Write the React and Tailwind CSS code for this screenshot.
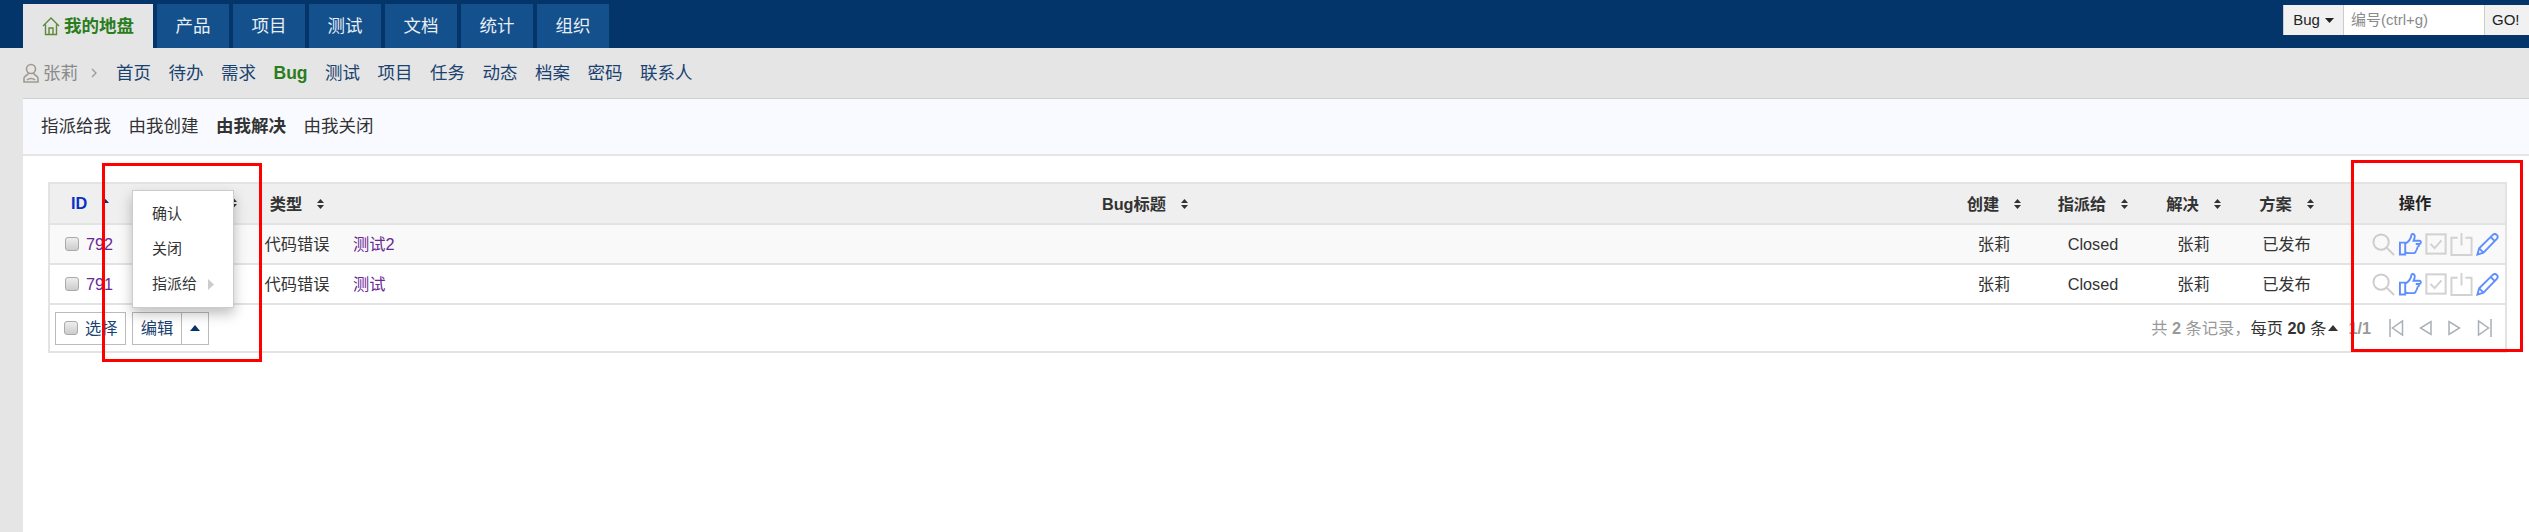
import { Fragment } from "react";

const tabs = ["产品", "项目", "测试", "文档", "统计", "组织"];
const links = ["首页", "待办", "需求", "Bug", "测试", "项目", "任务", "动态", "档案", "密码", "联系人"];
const filters = ["指派给我", "由我创建", "由我解决", "由我关闭"];
const rows = [
  { id: "792", title: "测试2", bg: "bg-[#f9f9f9]" },
  { id: "791", title: "测试", bg: "bg-white" },
];

function SortIcon({ up = true, down = true, color = "#333" }) {
  return (
    <svg width="7" height="12" viewBox="0 0 7 12" className="shrink-0">
      {up && <path d="M3.5 1L7 5H0z" fill={color} />}
      {down && <path d="M3.5 11L0 7h7z" fill={color} />}
    </svg>
  );
}

function Th({ label, className = "" }) {
  return (
    <th className={`font-bold text-[#333] ${className}`}>
      <span className="inline-flex items-center gap-[15px] align-middle">
        {label}
        <SortIcon />
      </span>
    </th>
  );
}

function Checkbox() {
  return (
    <span className="inline-block w-[14px] h-[14px] rounded-[3px] border border-[#aaa] bg-gradient-to-b from-[#eee] to-[#ccc] shrink-0" />
  );
}

function ActionIcons() {
  return (
    <div className="flex items-center justify-end gap-[3px] pr-[6px]">
      <svg width="23" height="23" viewBox="0 0 24 24" fill="none" stroke="#ccc" strokeWidth="2">
        <circle cx="9.5" cy="9.5" r="8" />
        <path d="M15.5 15.5L23 23" />
      </svg>
      <svg width="24" height="23" viewBox="0 0 24 24" fill="none" stroke="#5f8fff" strokeWidth="2">
        <path d="M1.5 10h5.5v12.5H1.5z" />
        <path d="M7 11c3-1.5 6-4.5 6.5-9 .2-1.8 3.5-1.2 3.5 1.5 0 1.8-.5 3-1.2 4.5H22c1.8 0 1.8 3.5-.2 3.5H18M21 12c1 1-.5 3-2 3M19 15c1 1 0 3-1 3M18 18c.5 1-.5 3-2 3H10c-1.2 0-2-.5-3-1" />
      </svg>
      <svg width="22" height="22" viewBox="0 0 24 24" fill="none" stroke="#d2d2d2" strokeWidth="2.2">
        <rect x="1.5" y="1.5" width="21" height="21" />
        <path d="M6 12l4.5 4.5L18 8" />
      </svg>
      <svg width="23" height="23" viewBox="0 0 24 24" fill="none" stroke="#d2d2d2" strokeWidth="2">
        <path d="M8 5H1.5v18h21V5H16" />
        <path d="M12 0v13" />
      </svg>
      <svg width="23" height="23" viewBox="0 0 24 24" fill="none" stroke="#5f8fff" strokeWidth="2">
        <path d="M1.5 22.5l1.8-6.5L17.5 2c1.2-1.2 3-1.2 4.2 0s1 3 0 4.2L7.8 20.5z" />
        <path d="M15.5 4.5l4.2 4M3.3 16l4.5 4.5" />
      </svg>
    </div>
  );
}

function Pager() {
  const stroke = "#aab0b6";
  return (
    <div className="flex items-center ml-[18px] gap-[15px]">
      <svg width="15" height="18" viewBox="0 0 15 18" fill="none" stroke={stroke} strokeWidth="1.5">
        <path d="M1 0v18M13.5 2v14L3.5 9z" />
      </svg>
      <svg width="13" height="16" viewBox="0 0 13 16" fill="none" stroke={stroke} strokeWidth="1.5">
        <path d="M12 1.5v13L1.5 8z" />
      </svg>
      <svg width="13" height="16" viewBox="0 0 13 16" fill="none" stroke={stroke} strokeWidth="1.5" className="ml-[1px]">
        <path d="M1 1.5v13L11.5 8z" />
      </svg>
      <svg width="15" height="18" viewBox="0 0 15 18" fill="none" stroke={stroke} strokeWidth="1.5" className="ml-[1px]">
        <path d="M14 0v18M1.5 2v14l10-7z" />
      </svg>
    </div>
  );
}

export default function App() {
  return (
    <div
      className="relative w-full h-[532px] overflow-hidden bg-[#e5e5e5] flex flex-col"
      style={{ fontFamily: '"Liberation Sans", "Noto Sans CJK SC", sans-serif' }}
    >
      {/* top bar */}
      <div className="h-[48px] shrink-0 bg-[#03356a] flex items-end justify-between">
        <div className="flex items-end gap-[4px] pl-[23px]">
          <div className="h-[44px] w-[130px] bg-[#e5e5e5] flex items-center pl-[19px] gap-[4px] text-[17.5px] font-bold text-[#2a7d1c]">
            <svg width="18" height="20" viewBox="0 0 18 20" fill="none" stroke="#5d8a3a" strokeWidth="1.4">
              <path d="M1 10L9 2l8 8M3.5 8.5V18.500h11V8.500M7 18.500v-6.500h4v6.500" />
            </svg>
            我的地盘
          </div>
          {tabs.map((t) => (
            <div
              key={t}
              className="h-[44px] w-[72px] bg-[#14508c] text-[#e8eef5] text-[17.5px] flex items-center justify-center"
            >
              {t}
            </div>
          ))}
        </div>
        <div className="self-start mt-[5px] h-[30px] flex text-[15px]">
          <div className="w-[60px] bg-[#f1f1f1] flex items-center justify-center gap-[5px] text-[#222] border-l border-[#ccc]">
            Bug
            <svg width="9" height="5" viewBox="0 0 9 5">
              <path d="M0 0h9L4.500 5z" fill="#222" />
            </svg>
          </div>
          <div className="w-[141px] bg-white border-l border-[#ccc] flex items-center pl-[7px] text-[#8a8a8a]">
            编号(ctrl+g)
          </div>
          <div className="w-[45px] bg-[#f1f1f1] border-l border-[#ccc] flex items-center pl-[7px] text-[#222]">
            GO!
          </div>
        </div>
      </div>

      {/* sub nav */}
      <div className="h-[50px] shrink-0 flex items-center pl-[23px] text-[17.5px]">
        <svg width="16" height="20" viewBox="0 0 16 20" fill="none" stroke="#a09a90" strokeWidth="1.6">
          <circle cx="8" cy="6" r="4.500" />
          <path d="M5.500 10c0 2-4.500 3-4.500 5v4h14v-4c0-2-4.500-3-4.500-5M4 17c2-2 6-2 8 0" />
        </svg>
        <span className="ml-[4px] text-[#8a8a8a]">张莉</span>
        <svg width="6" height="10" viewBox="0 0 6 10" fill="none" stroke="#9a9a9a" strokeWidth="1.3" className="ml-[13px]">
          <path d="M1 1l4 4-4 4" />
        </svg>
        <div className="flex items-center gap-[17.5px] ml-[19px] text-[#1a4270]">
          {links.map((l, i) =>
            l === "Bug" ? (
              <span key={i} className="font-bold text-[#2a7d1c]">
                {l}
              </span>
            ) : (
              <span key={i}>{l}</span>
            )
          )}
        </div>
      </div>

      {/* main panel */}
      <div className="flex-1 ml-[23px] bg-white border-t border-[#d0d0d0] flex flex-col">
        <div className="h-[57px] shrink-0 bg-[#f9faff] border-b-2 border-[#e5e5e5] flex items-center gap-[17.500px] pl-[18px] text-[17.5px] text-[#333]">
          {filters.map((f) => (
            <span key={f} className={f === "由我解决" ? "font-bold" : ""}>
              {f}
            </span>
          ))}
        </div>

        <div className="pt-[26px] pl-[25px] pr-[22px]">
          <div className="relative border-2 border-[#e3e3e3] text-[16.25px] text-[#333]">
            <table className="w-full table-fixed border-collapse">
              <colgroup>
                <col className="w-[80px]" />
                <col className="w-[129px]" />
                <col className="w-[76px]" />
                <col />
                <col className="w-[98px]" />
                <col className="w-[100px]" />
                <col className="w-[101px]" />
                <col className="w-[85px]" />
                <col className="w-[176px]" />
              </colgroup>
              <thead>
                <tr className="h-[40px] bg-[#efefef] border-b-2 border-[#e3e3e3]">
                  <th className="text-left pl-[21px] font-bold text-[#0b2fc4]">
                    <span className="inline-flex items-center gap-[15px]">
                      ID
                      <SortIcon down={false} color="#03356a" />
                    </span>
                  </th>
                  <th className="text-right pr-[22px]">
                    <span className="inline-flex">
                      <SortIcon />
                    </span>
                  </th>
                  <Th label="类型" />
                  <Th label="Bug标题" className="pl-[10px]" />
                  <Th label="创建" />
                  <Th label="指派给" />
                  <Th label="解决" />
                  <Th label="方案" />
                  <th className="font-bold text-[#222] pr-[4px]">操作</th>
                </tr>
              </thead>
              <tbody>
                {rows.map((r) => (
                  <tr key={r.id} className={`h-[40px] border-b-2 border-[#e3e3e3] ${r.bg}`}>
                    <td className="pl-[15px]">
                      <span className="flex items-center gap-[7px] text-[#6a2a96]">
                        <Checkbox />
                        {r.id}
                      </span>
                    </td>
                    <td />
                    <td className="text-center">代码错误</td>
                    <td className="pl-[18px] text-[#6a2a96]">{r.title}</td>
                    <td className="text-center">张莉</td>
                    <td className="text-center">Closed</td>
                    <td className="text-center">张莉</td>
                    <td className="text-center">已发布</td>
                    <td>
                      <ActionIcons />
                    </td>
                  </tr>
                ))}
              </tbody>
            </table>

            {/* table footer */}
            <div className="h-[46px] flex items-center justify-between pl-[5px] pr-[13px]">
              <div className="flex items-center gap-[6px] text-[#1a4270]">
                <div className="h-[33px] w-[71px] border border-[#bbb] flex items-center gap-[7px] pl-[8px]">
                  <Checkbox />
                  选择
                </div>
                <div className="flex h-[33px]">
                  <div className="w-[50px] border border-[#bbb] flex items-center justify-center">编辑</div>
                  <div className="w-[27px] border border-l-0 border-[#bbb] flex items-center justify-center">
                    <svg width="10" height="6" viewBox="0 0 10 6">
                      <path d="M5 0l5 6H0z" fill="#03356a" />
                    </svg>
                  </div>
                </div>
              </div>
              <div className="flex items-center text-[#999]">
                <span className="whitespace-pre">
                  共 <b>2</b> 条记录，
                </span>
                <span className="whitespace-pre text-[#333]">
                  每页 <b>20</b> 条
                </span>
                <svg width="10" height="6" viewBox="0 0 10 6" className="ml-[2px]">
                  <path d="M5 0l5 6H0z" fill="#333" />
                </svg>
                <b className="ml-[10px]">1/1</b>
                <Pager />
              </div>
            </div>

            {/* dropdown menu, open over the table */}
            <div className="absolute left-[82px] top-[6px] w-[102px] h-[118px] bg-white border border-[#ccc] shadow-[0_6px_12px_rgba(0,0,0,0.25)] flex flex-col justify-center gap-[15px] pl-[19px] text-[15px] text-[#333]">
              <span className="leading-[20px]">确认</span>
              <span className="leading-[20px]">关闭</span>
              <span className="leading-[20px] flex items-center gap-[11px]">
                指派给
                <svg width="6" height="11" viewBox="0 0 6 11">
                  <path d="M0 0l6 5.500L0 11z" fill="#ccc" />
                </svg>
              </span>
            </div>
          </div>
        </div>
      </div>

      {/* red annotation boxes */}
      <div className="absolute left-[102px] top-[163px] w-[160px] h-[199px] border-[3px] border-[#ff0000]" />
      <div className="absolute left-[2351px] top-[160px] w-[172px] h-[192px] border-[3px] border-[#ff0000]" />
    </div>
  );
}
